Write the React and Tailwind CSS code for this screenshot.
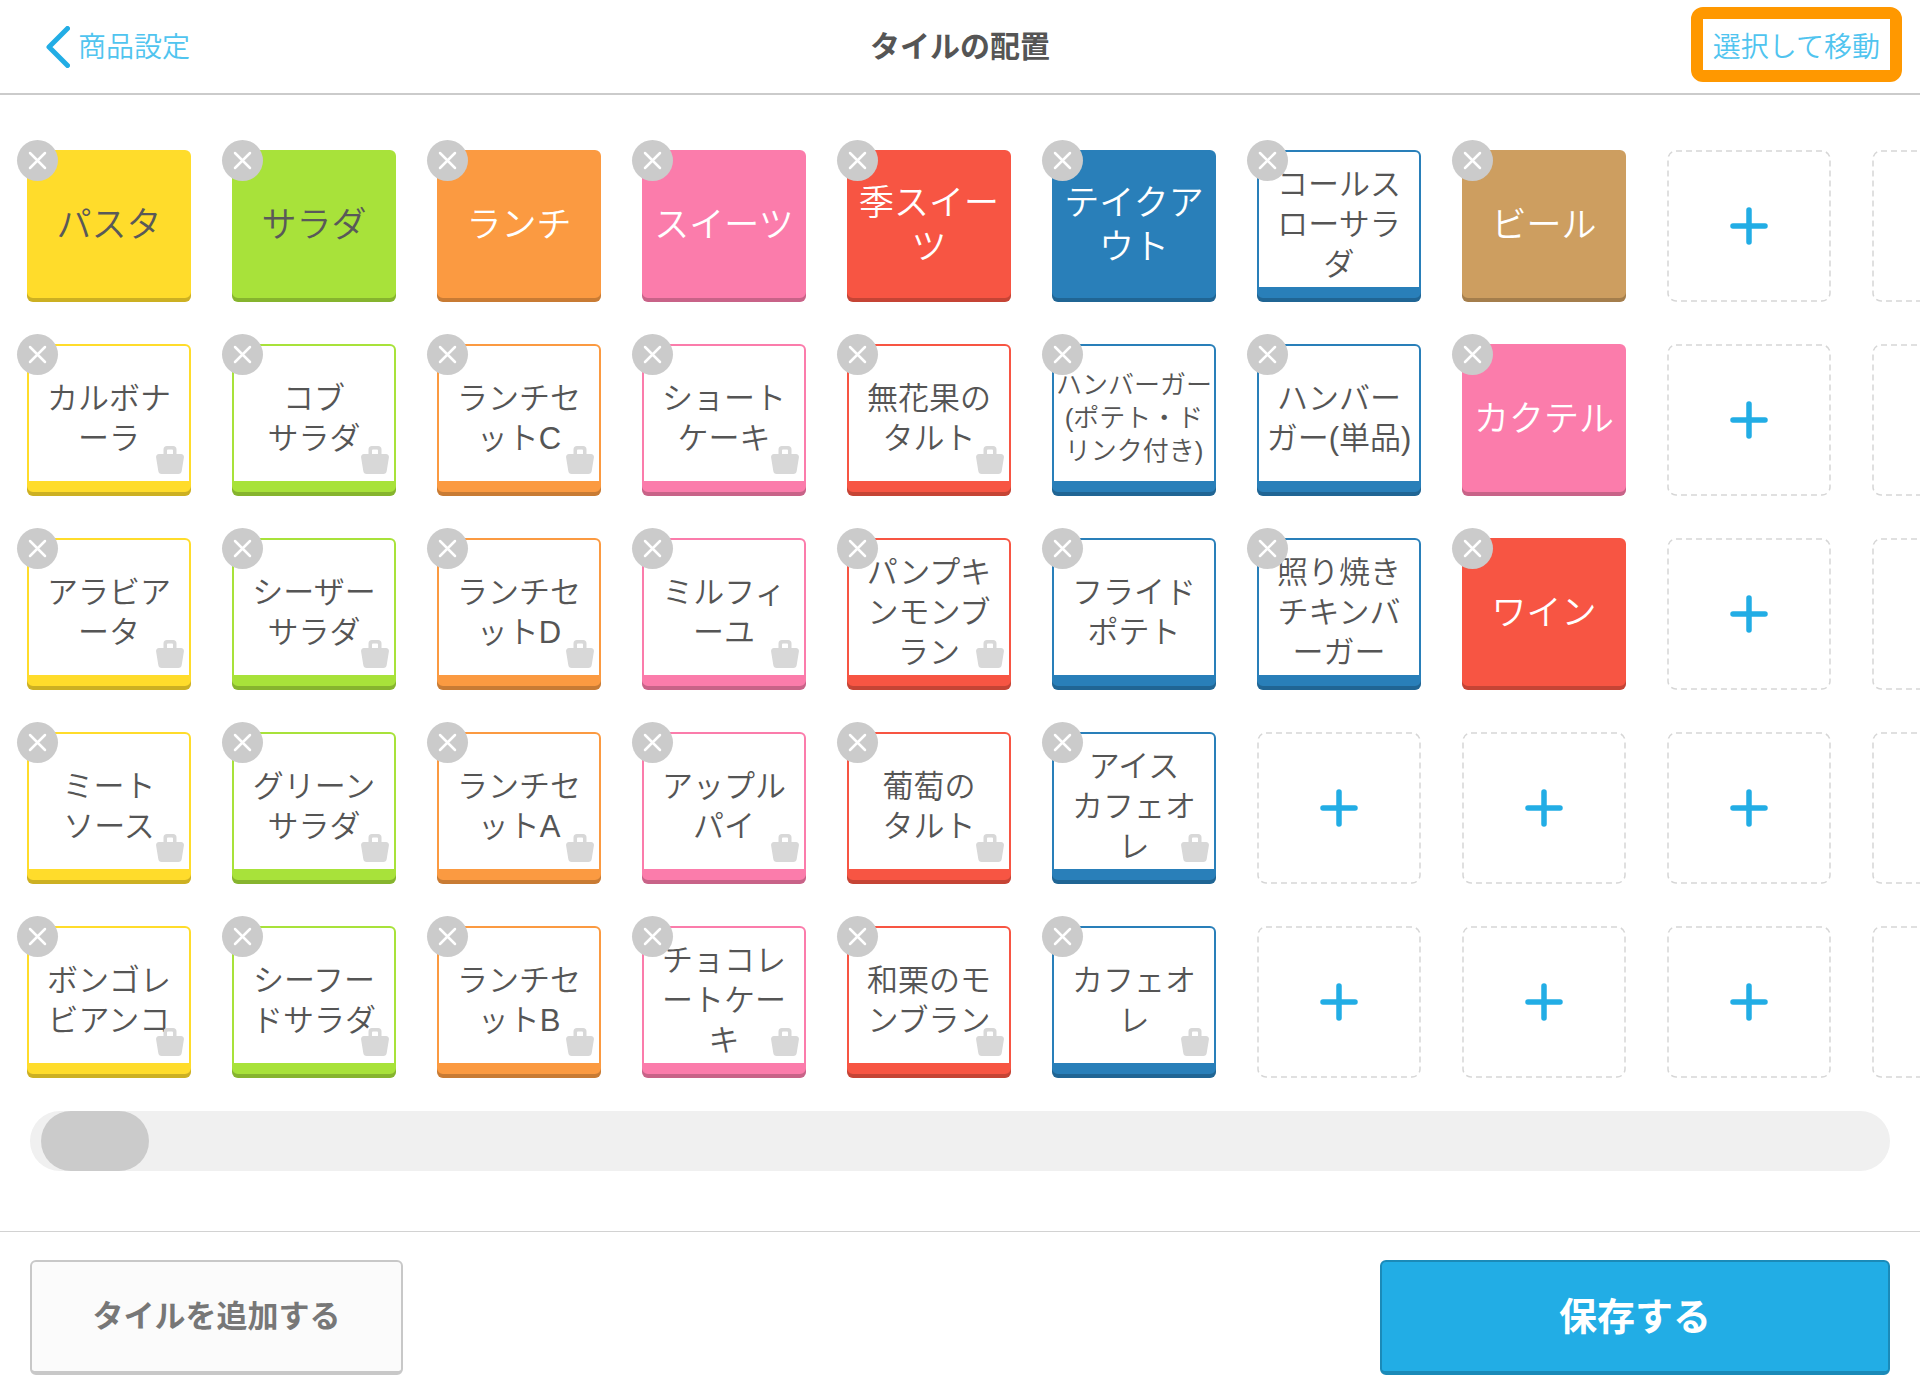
const COLORS = {
    yellow: 'bg-[#ffdc2b]',
    green: 'bg-[#a8e23a]',
    orange: 'bg-[#fb9a41]',
    pink: 'bg-[#fb7cab]',
    red: 'bg-[#f75543]',
    blue: 'bg-[#297fb9]',
    brown: 'bg-[#cd9e60]',
};

const SIZES = {
    category: 'text-[35px] leading-[44px]',
    item: 'text-[31px] leading-[40px]',
    small: 'text-[26px] leading-[33px]',
};

const category = (color, lines, dark = false) => ({ type: 'category', color, lines, dark });
const item = (color, lines, takeout = true, size = 'item') => ({ type: 'item', color, lines, takeout, size });

const rows = [
    [
        category('yellow', ['パスタ'], true),
        category('green', ['サラダ'], true),
        category('orange', ['ランチ']),
        category('pink', ['スイーツ']),
        category('red', ['季スイー', 'ツ']),
        category('blue', ['テイクア', 'ウト']),
        item('blue', ['コールス', 'ローサラ', 'ダ'], false),
        category('brown', ['ビール']),
        null,
        null,
    ],
    [
        item('yellow', ['カルボナ', 'ーラ']),
        item('green', ['コブ', 'サラダ']),
        item('orange', ['ランチセ', 'ットC']),
        item('pink', ['ショート', 'ケーキ']),
        item('red', ['無花果の', 'タルト']),
        item('blue', ['ハンバーガー', '(ポテト・ド', 'リンク付き)'], false, 'small'),
        item('blue', ['ハンバー', 'ガー(単品)'], false),
        category('pink', ['カクテル']),
        null,
        null,
    ],
    [
        item('yellow', ['アラビア', 'ータ']),
        item('green', ['シーザー', 'サラダ']),
        item('orange', ['ランチセ', 'ットD']),
        item('pink', ['ミルフィ', 'ーユ']),
        item('red', ['パンプキ', 'ンモンブ', 'ラン']),
        item('blue', ['フライド', 'ポテト'], false),
        item('blue', ['照り焼き', 'チキンバ', 'ーガー'], false),
        category('red', ['ワイン']),
        null,
        null,
    ],
    [
        item('yellow', ['ミート', 'ソース']),
        item('green', ['グリーン', 'サラダ']),
        item('orange', ['ランチセ', 'ットA']),
        item('pink', ['アップル', 'パイ']),
        item('red', ['葡萄の', 'タルト']),
        item('blue', ['アイス', 'カフェオ', 'レ']),
        null,
        null,
        null,
        null,
    ],
    [
        item('yellow', ['ボンゴレ', 'ビアンコ']),
        item('green', ['シーフー', 'ドサラダ']),
        item('orange', ['ランチセ', 'ットB']),
        item('pink', ['チョコレ', 'ートケー', 'キ']),
        item('red', ['和栗のモ', 'ンブラン']),
        item('blue', ['カフェオ', 'レ']),
        null,
        null,
        null,
        null,
    ],
];

function BagIcon() {
    return (
        <svg className="absolute right-[7px] bottom-[22px] w-7 h-7" viewBox="0 0 28 28" fill="#d8d8d8">
            <path
                fillRule="evenodd"
                d="M11 0h6a3.500 3.500 0 0 1 3.500 3.500V8H25a3 3 0 0 1 2.900 3.500l-2.200 13.500a3.500 3.500 0 0 1-3.400 3H5.700a3.500 3.500 0 0 1-3.400-3L.1 11.500A3 3 0 0 1 3 8h4.500V3.500A3.500 3.500 0 0 1 11 0Zm1 3.500a1 1 0 0 0-1 1V8h6V4.500a1 1 0 0 0-1-1Z"
            />
        </svg>
    );
}

function Label({ lines, className }) {
    return (
        <span className={className}>
            {lines.map((line) => (
                <span key={line} className="block whitespace-nowrap">{line}</span>
            ))}
        </span>
    );
}

function EmptyTile() {
    return (
        <button type="button" aria-label="追加" className="h-[152px] grid place-items-center">
            <svg className="col-start-1 row-start-1 w-full h-full" fill="none">
                <rect x="1" y="1" width="162" height="150" rx="8" stroke="#d6d6d6" strokeWidth="1.500" strokeDasharray="6 4" />
            </svg>
            <svg className="col-start-1 row-start-1 w-[38px] h-[38px]" viewBox="0 0 38 38" fill="none" stroke="#22ade5" strokeWidth="5.500" strokeLinecap="round">
                <path d="M19 3v32M3 19h32" />
            </svg>
        </button>
    );
}

function Tile({ tile }) {
    const name = tile.lines.join('');
    return (
        <div className="relative">
            {tile.type === 'category' ? (
                <button
                    type="button"
                    className={`w-full h-[152px] pb-[2px] rounded-md flex items-center justify-center shadow-[inset_0_-4px_0_rgba(0,0,0,0.2)] ${COLORS[tile.color]} ${tile.dark ? 'text-[#595959]' : 'text-white'}`}
                >
                    <Label lines={tile.lines} className={SIZES.category} />
                </button>
            ) : (
                <button
                    type="button"
                    className={`w-full h-[152px] px-[2px] pt-[2px] pb-[15px] rounded-md flex shadow-[inset_0_-4px_0_rgba(0,0,0,0.2)] ${COLORS[tile.color]}`}
                >
                    <span className="flex-1 self-stretch pt-[10px] bg-white rounded-t flex items-center justify-center text-[#555]">
                        <Label lines={tile.lines} className={SIZES[tile.size]} />
                    </span>
                </button>
            )}
            {tile.takeout && <BagIcon />}
            <button
                type="button"
                aria-label={`${name}を削除`}
                className="absolute -top-[10px] -left-[10px] w-[41px] h-[41px] rounded-full bg-[#cbcbcb] flex items-center justify-center"
            >
                <svg className="w-[19px] h-[19px]" viewBox="0 0 19 19" fill="none" stroke="white" strokeWidth="2.500" strokeLinecap="round">
                    <path d="M2 2l15 15M17 2L2 17" />
                </svg>
            </button>
        </div>
    );
}

export default function App() {
    return (
        <div
            lang="ja"
            className="min-h-screen flex flex-col bg-white overflow-hidden font-[350] font-['Liberation_Sans','Noto_Sans_CJK_JP',sans-serif]"
        >
            {/* Header */}
            <header className="h-[95px] shrink-0 border-b-2 border-[#cbcbcb] grid grid-cols-[1fr_auto_1fr] items-center">
                <a href="#products" className="justify-self-start ml-[46px] flex items-center gap-2 text-[28px] leading-[40px] text-[#50c4ef]">
                    <svg className="w-6 h-[42px]" viewBox="0 0 24 42" fill="none" stroke="#22ade5" strokeWidth="5" strokeLinecap="round" strokeLinejoin="round">
                        <path d="M21.500 2.500L3 21l18.500 18.500" />
                    </svg>
                    <span className="pt-[2px]">商品設定</span>
                </a>
                <h1 className="text-[30px] leading-[40px] font-bold text-[#555]">タイルの配置</h1>
                <button
                    type="button"
                    className="justify-self-end mr-[18px] mb-1 h-[75px] px-[10px] pt-[6px] border-[12px] border-[#ff9800] rounded-xl text-[28px] leading-[40px] text-[#50c4ef]"
                >
                    選択して移動
                </button>
            </header>

            {/* Tiles */}
            <main className="flex-1">
                <div className="pt-[55px] pl-[27px] grid grid-cols-[repeat(10,164px)] gap-x-[41px] gap-y-[42px]">
                    {rows.map((row, r) =>
                        row.map((tile, c) =>
                            tile ? <Tile key={`${r}-${c}`} tile={tile} /> : <EmptyTile key={`${r}-${c}`} />
                        )
                    )}
                </div>
                <div
                    role="scrollbar"
                    aria-orientation="horizontal"
                    aria-valuenow={0}
                    className="mt-[33px] mx-[30px] h-[60px] px-[11px] rounded-full bg-[#f0f0f0]"
                >
                    <div className="w-[108px] h-full rounded-full bg-[#cbcbcb]" />
                </div>
            </main>

            {/* Actions */}
            <footer className="shrink-0 border-t border-[#d2d2d2] px-[30px] pt-7 pb-[25px] flex justify-between">
                <button
                    type="button"
                    className="w-[373px] h-[115px] rounded-md border-2 border-b-4 border-[#c8c8c8] bg-[#fbfbfb] text-[31px] leading-[40px] font-bold text-[#777]"
                >
                    タイルを追加する
                </button>
                <button
                    type="button"
                    className="w-[510px] h-[115px] rounded-md border-2 border-b-4 border-[#1b8ab8] bg-[#22ade5] text-[38px] leading-[48px] font-bold text-white"
                >
                    保存する
                </button>
            </footer>
        </div>
    );
}
